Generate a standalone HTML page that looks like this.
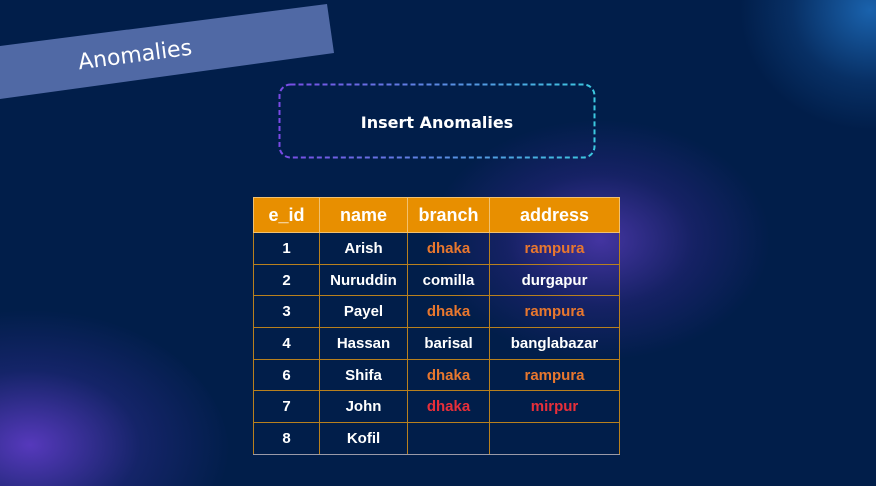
<!DOCTYPE html>
<html style="width:876px;height:486px;overflow:hidden"><head><meta charset="utf-8"><style>
html,body{margin:0;width:876px;height:486px;overflow:hidden}
#w{position:absolute;left:0;top:0;width:876px;height:486px;overflow:hidden;background:#011e4a;font-family:"Liberation Sans",sans-serif}
.g{position:absolute;border-radius:50%}
table{position:absolute;left:253px;top:197px;border-collapse:collapse;width:367px}
td,th{border:1px solid #b8801e;text-align:center;font-weight:bold;color:#fff;font-size:15px;padding:0}
tr{height:31.7px}
tr:first-child{height:35px}
th{background:#e88f00;font-size:18px;border-color:#f0c070}
.o{color:#e8772e}.r{color:#e82f3a}
tr:last-child td{border-bottom-color:#9a9aa8}
</style></head><body><div id="w">
<div class="g" style="left:430px;top:120px;width:340px;height:240px;background:radial-gradient(closest-side,rgba(90,60,190,.75),rgba(60,40,150,.35) 55%,rgba(1,30,74,0));"></div>
<div class="g" style="left:-170px;top:310px;width:400px;height:300px;background:radial-gradient(closest-side at 50% 45%,rgba(95,60,200,.9),rgba(50,45,150,.4) 55%,rgba(1,30,74,0));"></div>
<div class="g" style="left:740px;top:-110px;width:260px;height:240px;background:radial-gradient(closest-side,rgba(30,110,190,.85),rgba(20,80,150,.35) 60%,rgba(1,30,74,0));"></div>
<svg width="876" height="486" style="position:absolute;left:0;top:0">
<defs><linearGradient id="b" x1="0" x2="1"><stop offset="0" stop-color="#7a4ae6"/><stop offset="1" stop-color="#3cc8e0"/></linearGradient></defs>
<polygon points="0,46 327,4 334,53 0,99" fill="#5069a5"/>
<text x="135" y="62" transform="rotate(-7.5 135 55)" text-anchor="middle" fill="#fff" font-family="DejaVu Sans,sans-serif" font-size="22">Anomalies</text>
<rect x="279.5" y="84.5" width="315" height="73" rx="11" fill="none" stroke="url(#b)" stroke-width="2" stroke-dasharray="5,3"/>
<text x="437" y="128" text-anchor="middle" fill="#fff" font-family="DejaVu Sans,sans-serif" font-weight="bold" font-size="16">Insert Anomalies</text>
</svg>
<table>
<tr><th style="width:65px">e_id</th><th style="width:87px">name</th><th style="width:81px">branch</th><th>address</th></tr>
<tr><td>1</td><td>Arish</td><td class="o">dhaka</td><td class="o">rampura</td></tr>
<tr><td>2</td><td>Nuruddin</td><td>comilla</td><td>durgapur</td></tr>
<tr><td>3</td><td>Payel</td><td class="o">dhaka</td><td class="o">rampura</td></tr>
<tr><td>4</td><td>Hassan</td><td>barisal</td><td>banglabazar</td></tr>
<tr><td>6</td><td>Shifa</td><td class="o">dhaka</td><td class="o">rampura</td></tr>
<tr><td>7</td><td>John</td><td class="r">dhaka</td><td class="r">mirpur</td></tr>
<tr><td>8</td><td>Kofil</td><td></td><td></td></tr>
</table>
</div></body></html>
